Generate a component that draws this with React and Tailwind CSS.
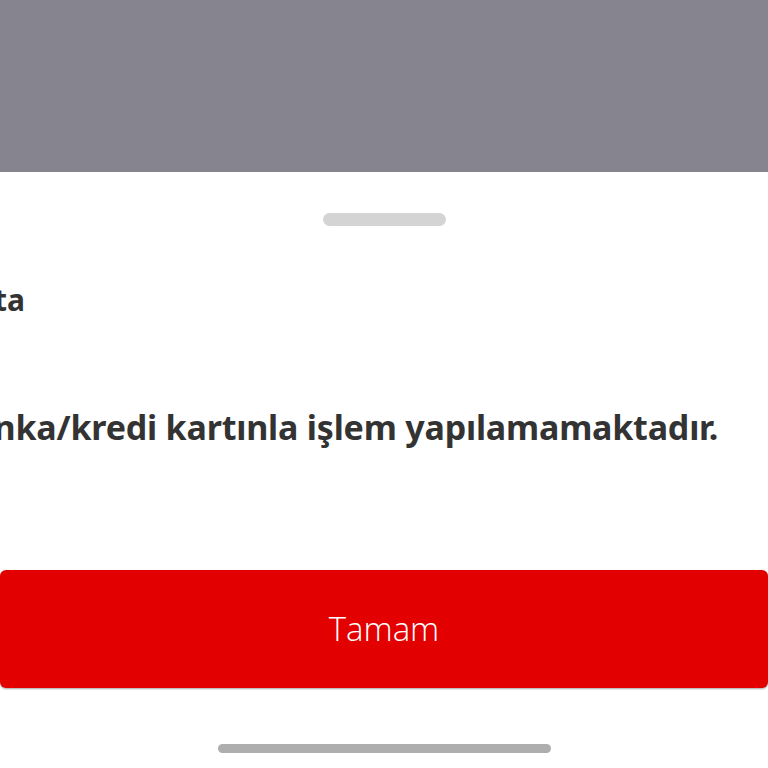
import React from 'react';

const App = () => {
  return (
    <div className="relative w-full h-[768px] overflow-hidden bg-[#85848f] flex flex-col font-['Noto_Sans',sans-serif]">
      {/* dimmed page behind the sheet */}
      <div className="h-[172px] shrink-0" />

      <div className="flex-1 bg-white flex flex-col">
        <div className="mt-[41px] mx-auto w-[123px] h-[13px] rounded-full bg-[#d4d4d4]" />

        <h2 className="mt-[54px] ml-[-47px] text-[30px] leading-[40px] font-bold text-[#333333] whitespace-nowrap">
          Hata
        </h2>

        <p className="mt-[84px] ml-[-49px] text-[34px] leading-[46px] font-bold text-[#333333] whitespace-nowrap tracking-[-0.2px]">
          Banka/kredi kartınla işlem yapılamamaktadır.
        </p>

        <button
          type="button"
          className="mt-[120px] w-full h-[118px] rounded-md bg-[#e30000] shadow-[0_1px_2px_rgba(0,0,0,0.35)] text-white text-[33px] font-light font-['Open_Sans',sans-serif] flex items-center justify-center"
        >
          Tamam
        </button>

        <div className="mt-[56px] mx-auto w-[333px] h-[9px] rounded-full bg-[#aeaeae]" />
      </div>
    </div>
  );
};

export default App;
